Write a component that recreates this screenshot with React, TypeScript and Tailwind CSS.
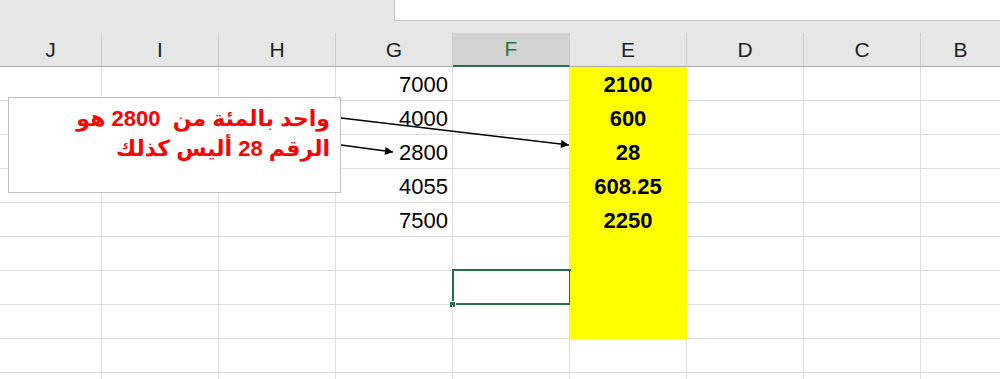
import clsx from 'clsx';

const COLS = ['J', 'I', 'H', 'G', 'F', 'E', 'D', 'C', 'B'];

const WIDTHS: Record<string, string> = {
  J: 'w-[102px]',
  I: 'w-[117px]',
  H: 'w-[117px]',
  G: 'w-[117px]',
  F: 'w-[117px]',
  E: 'w-[117px]',
  D: 'w-[117px]',
  C: 'w-[117px]',
  B: 'flex-1',
};

const G_VALUES = ['7000', '4000', '2800', '4055', '7500'];
const E_VALUES = ['2100', '600', '28', '608.25', '2250'];

const ROW_COUNT = 10;
const YELLOW_ROWS = 8;
const SELECTED_ROW = 6;

const font = { fontFamily: '"Liberation Sans", Arial, sans-serif' };

function HeaderRow() {
  return (
    <div className="flex h-[34px] bg-[#e6e6e6]">
      {COLS.map((c) => {
        const active = c === 'F';
        return (
          <div
            key={c}
            className={clsx(
              'flex items-center justify-center text-[21px] border-r border-[#cacaca] last:border-r-0',
              WIDTHS[c],
              active
                ? 'bg-[#d2d2d2] text-[#217346] border-b-2 border-b-[#217346]'
                : 'text-[#1f1f1f] border-b border-b-[#ababab]'
            )}
          >
            {c}
          </div>
        );
      })}
    </div>
  );
}

function Cell({ col, row }: { col: string; row: number }) {
  const yellow = col === 'E' && row < YELLOW_ROWS;
  const yellowEdge = col === 'F' && row < YELLOW_ROWS;
  const selected = col === 'F' && row === SELECTED_ROW;

  let content: string | null = null;
  if (col === 'G' && row < G_VALUES.length) content = G_VALUES[row];
  if (col === 'E' && row < E_VALUES.length) content = E_VALUES[row];

  return (
    <div
      className={clsx(
        'relative flex items-center pt-[2px] border-r border-b last:border-r-0',
        WIDTHS[col],
        yellow ? 'bg-[#ffff00] border-[#ffff00]' : 'border-[#dedede]',
        yellowEdge && 'border-r-[#ffff00]',
        col === 'G' && 'justify-end pr-[4px] text-[22px] text-black',
        col === 'E' && 'justify-center font-bold text-[22px] text-black'
      )}
    >
      {content}
      {selected && (
        <>
          <div className="absolute -left-px -top-[2px] w-[119px] h-[36px] border-2 border-[#217346]" />
          <div className="absolute -left-[4px] -bottom-[4px] w-[7px] h-[7px] bg-[#217346] border border-white" />
        </>
      )}
    </div>
  );
}

function Arrows() {
  return (
    <svg
      className="absolute left-0 top-0 pointer-events-none"
      width={1000}
      height={379}
      viewBox="0 0 1000 379"
    >
      <defs>
        <marker
          id="head"
          viewBox="0 0 10 10"
          refX={10}
          refY={5}
          markerUnits="userSpaceOnUse"
          markerWidth={11}
          markerHeight={8}
          orient="auto"
        >
          <path d="M0 0 L10 5 L0 10 z" fill="#000" />
        </marker>
      </defs>
      <line x1={341} y1={118} x2={569} y2={145} stroke="#000" strokeWidth={1.3} markerEnd="url(#head)" />
      <line x1={341} y1={145} x2={393} y2={152} stroke="#000" strokeWidth={1.3} markerEnd="url(#head)" />
    </svg>
  );
}

function Callout() {
  return (
    <div className="absolute left-[8px] top-[97px] w-[333px] h-[96px] bg-white border-[1.5px] border-[#c0c0c0]">
      <div
        dir="rtl"
        className="pr-[10px] pt-[6px] text-right text-[22px] leading-[30px] font-bold text-[#ff0000]"
        style={{ fontFamily: '"Liberation Sans", "DejaVu Sans", Arial, sans-serif' }}
      >
        <div>واحد بالمئة من&nbsp; 2800 هو</div>
        <div>الرقم 28 أليس كذلك</div>
      </div>
    </div>
  );
}

export default function App() {
  return (
    <div className="relative w-[1000px] h-[379px] overflow-hidden bg-white" style={font}>
      {/* formula bar strip */}
      <div className="flex h-[33px] bg-[#e6e6e6]">
        <div className="w-[394px]" />
        <div className="flex-1 h-[21px] bg-white border-l border-b border-[#c6c6c6]" />
      </div>

      <HeaderRow />

      {Array.from({ length: ROW_COUNT }, (_, r) => (
        <div key={r} className="flex h-[34px]">
          {COLS.map((c) => (
            <Cell key={c} col={c} row={r} />
          ))}
        </div>
      ))}

      <Arrows />
      <Callout />
    </div>
  );
}
